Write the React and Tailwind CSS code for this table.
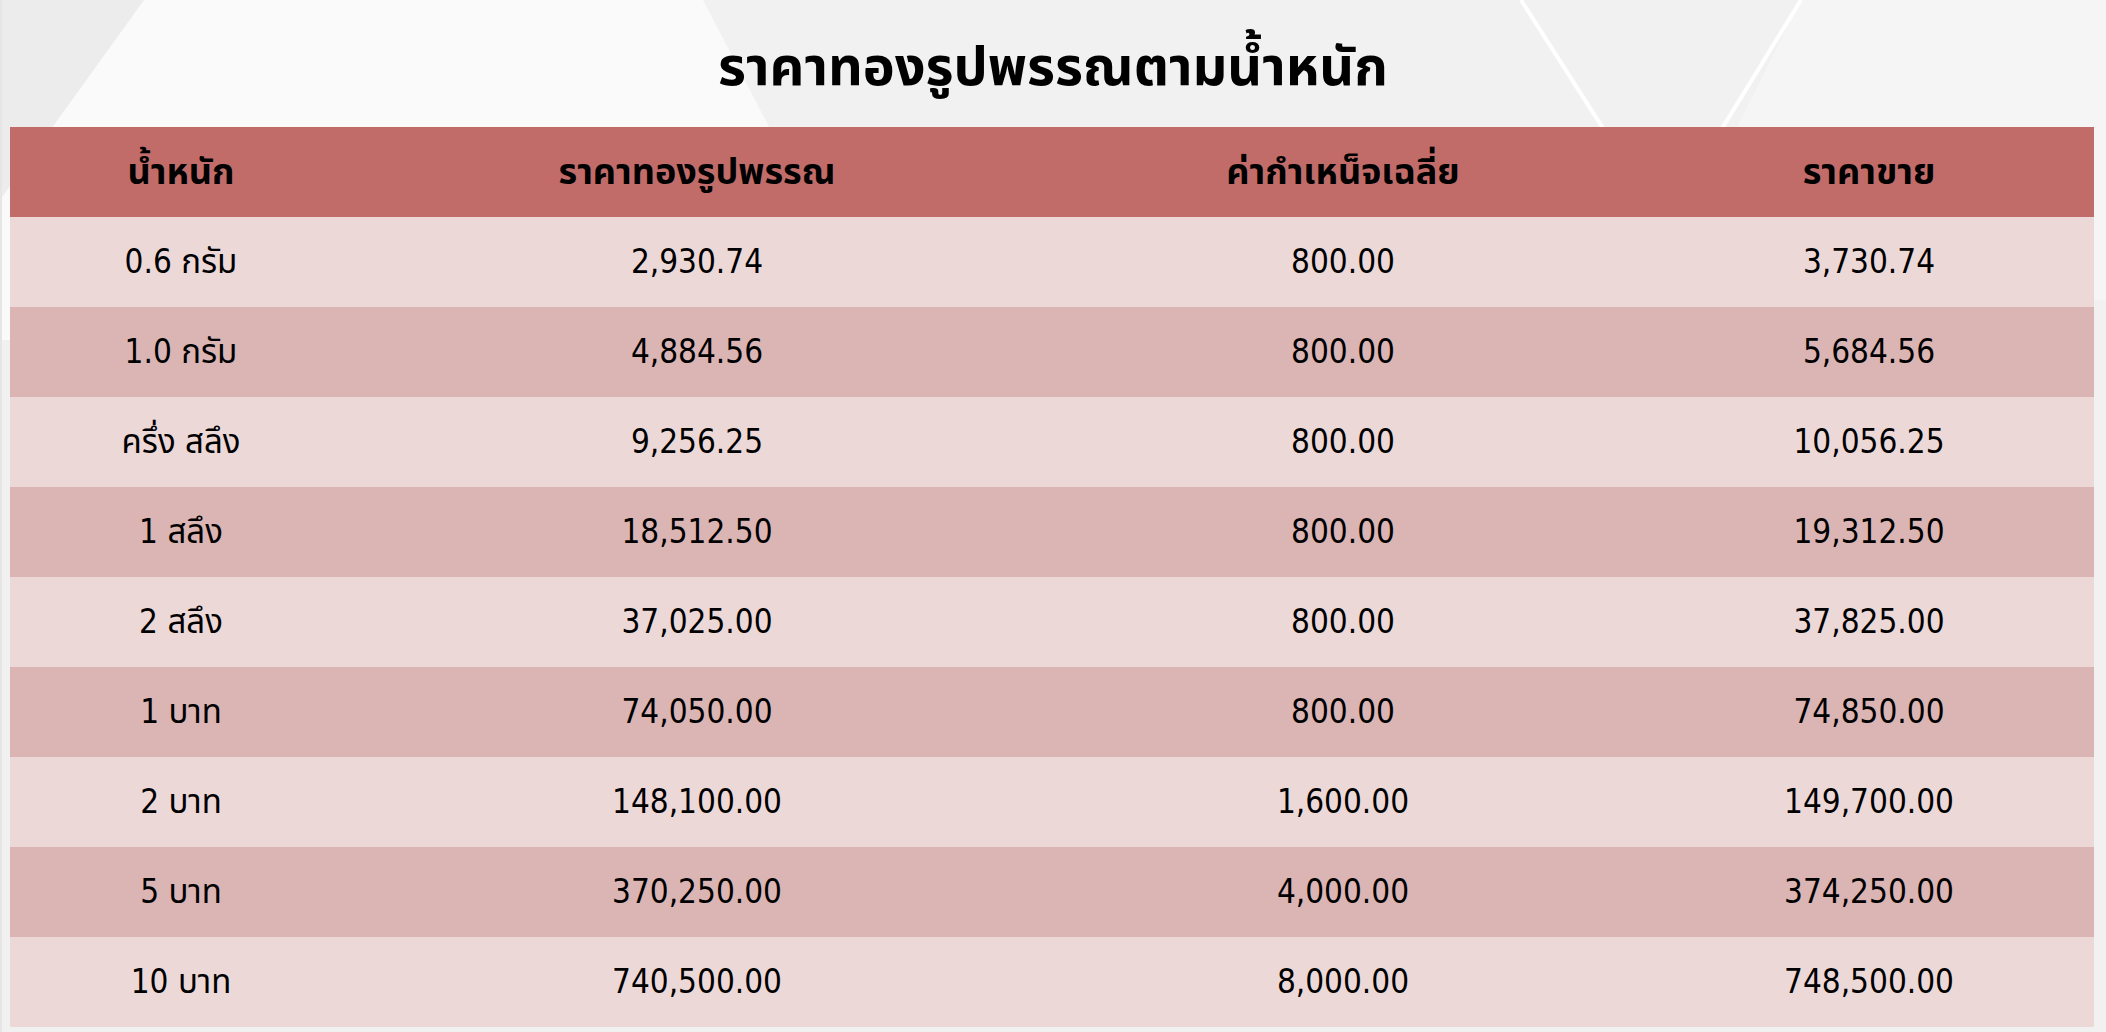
import React from 'react'

const rows = [
    ['0.6 กรัม', '2,930.74', '800.00', '3,730.74'],
    ['1.0 กรัม', '4,884.56', '800.00', '5,684.56'],
    ['ครึ่ง สลึง', '9,256.25', '800.00', '10,056.25'],
    ['1 สลึง', '18,512.50', '800.00', '19,312.50'],
    ['2 สลึง', '37,025.00', '800.00', '37,825.00'],
    ['1 บาท', '74,050.00', '800.00', '74,850.00'],
    ['2 บาท', '148,100.00', '1,600.00', '149,700.00'],
    ['5 บาท', '370,250.00', '4,000.00', '374,250.00'],
    ['10 บาท', '740,500.00', '8,000.00', '748,500.00'],
]

const headers = ['น้ำหนัก', 'ราคาทองรูปพรรณ', 'ค่ากำเหน็จเฉลี่ย', 'ราคาขาย']

function Backdrop() {
    // soft abstract streaks behind the page
    return (
        <svg className="absolute inset-0 w-full h-full" viewBox="0 0 2106 1032" preserveAspectRatio="none">
            <rect width="2106" height="1032" fill="#f1f1f1" />
            <polygon points="0,0 144,0 40,200 0,200" fill="#ececec" />
            <polygon points="144,0 703,0 880,340 0,340 0,200" fill="#fafafa" />
            <polygon points="1801,0 2106,0 2106,300 1650,300" fill="#f5f5f5" />
            <line x1="1521" y1="0" x2="1700" y2="280" stroke="#ffffff" strokeWidth="4" />
            <line x1="1801" y1="0" x2="1629" y2="280" stroke="#ffffff" strokeWidth="4" />
            <rect x="0" y="0" width="2" height="1032" fill="#e6e6e6" />
        </svg>
    )
}

export default function App() {
    return (
        <div className="relative w-[2106px] h-[1032px] overflow-hidden text-black" style={{ fontFamily: "'DejaVu Sans Condensed', Tahoma, 'Noto Sans Thai', 'Noto Sans', sans-serif" }}>
            <Backdrop />

            <div className="relative flex flex-col">
                {/* Title */}
                <div className="h-[127px] flex items-center justify-center pt-[6px]">
                    <h1 className="text-[54px] font-bold leading-none">ราคาทองรูปพรรณตามน้ำหนัก</h1>
                </div>

                {/* Price table */}
                <div className="px-[10px]">
                    <table className="w-[2084px] table-fixed border-collapse text-[33px] text-center">
                        <colgroup>
                            <col className="w-[342px]" />
                            <col className="w-[690px]" />
                            <col className="w-[602px]" />
                            <col className="w-[450px]" />
                        </colgroup>
                        <thead>
                            <tr className="h-[90px] bg-[#c26c6a]">
                                {headers.map((h) => (
                                    <th key={h} className="text-[36px] font-bold p-0">{h}</th>
                                ))}
                            </tr>
                        </thead>
                        <tbody>
                            {rows.map((r, i) => (
                                <tr key={r[0]} className={`h-[90px] ${i % 2 === 0 ? 'bg-[#edd8d8]' : 'bg-[#dbb4b4]'}`}>
                                    {r.map((c, j) => (
                                        <td key={j} className="p-0">{c}</td>
                                    ))}
                                </tr>
                            ))}
                        </tbody>
                    </table>
                </div>
            </div>
        </div>
    )
}
